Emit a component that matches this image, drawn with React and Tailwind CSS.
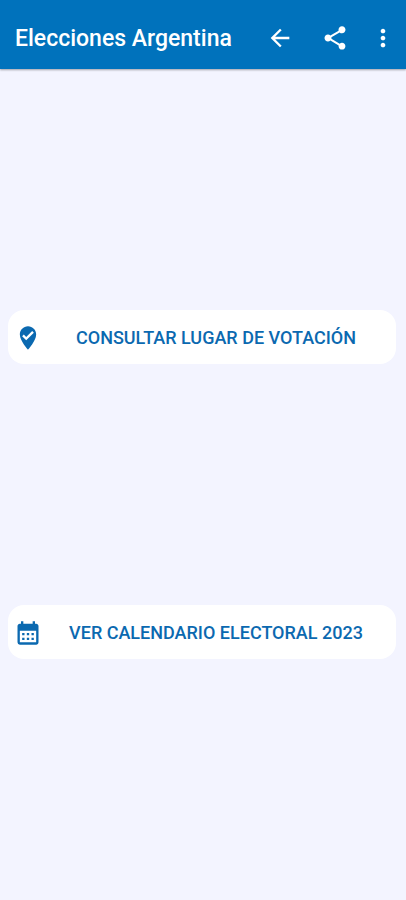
import { MdArrowBack, MdShare, MdMoreVert, MdWhereToVote, MdCalendarMonth } from 'react-icons/md'

const OPTIONS = [
  { label: 'Consultar lugar de votación', Icon: MdWhereToVote },
  { label: 'Ver calendario electoral 2023', Icon: MdCalendarMonth },
]

function AppBar() {
  return (
    <header className="flex h-[69px] shrink-0 items-center bg-[#0072bc] pt-2 pr-[9px] pb-[1px] pl-[15px] text-white shadow-[0_1px_2px_rgba(0,0,0,0.35)]">
      <h1 className="grow truncate pt-0.5 text-[23px] leading-7 font-medium">Elecciones Argentina</h1>
      <button type="button" aria-label="Volver">
        <MdArrowBack size={28} />
      </button>
      <button type="button" aria-label="Compartir" className="ml-[27px]">
        <MdShare size={28} />
      </button>
      <button type="button" aria-label="Más opciones" className="ml-5">
        <MdMoreVert size={28} />
      </button>
    </header>
  )
}

function OptionButton({ label, Icon }) {
  return (
    <button type="button" className="flex h-[54px] w-full items-center rounded-2xl bg-white px-1.5 pt-0.5 text-[#0b69b0]">
      <Icon size={28} className="shrink-0" />
      <span className="grow text-center text-lg font-medium uppercase">{label}</span>
    </button>
  )
}

export default function App() {
  return (
    <div className="flex min-h-screen flex-col bg-[#f3f4ff] font-['Roboto',sans-serif]">
      <AppBar />
      <main className="flex grow flex-col justify-evenly pr-2.5 pl-2">
        {OPTIONS.map((option) => (
          <OptionButton key={option.label} {...option} />
        ))}
      </main>
    </div>
  )
}
